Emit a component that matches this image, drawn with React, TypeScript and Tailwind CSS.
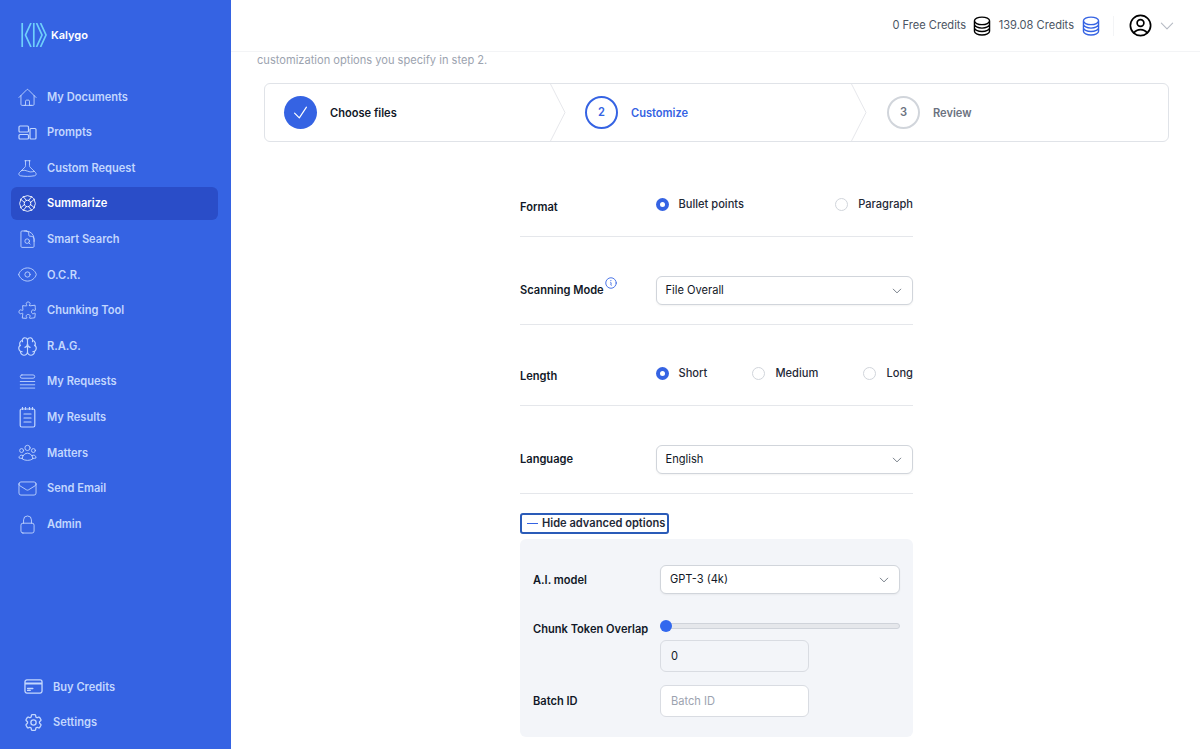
import { Brain } from "lucide-react";
import {
  HiOutlineBeaker,
  HiOutlineCheck,
  HiOutlineChevronDown,
  HiOutlineCircleStack,
  HiOutlineCog6Tooth,
  HiOutlineCreditCard,
  HiOutlineDocumentMagnifyingGlass,
  HiOutlineEnvelope,
  HiOutlineEye,
  HiOutlineHome,
  HiOutlineInformationCircle,
  HiOutlineLifebuoy,
  HiOutlineLockClosed,
  HiOutlinePuzzlePiece,
  HiOutlineQueueList,
  HiOutlineUserCircle,
  HiOutlineUserGroup,
} from "react-icons/hi2";

const PromptsIcon = ({ className }: { className?: string }) => (
  <svg viewBox="0 0 21 21" fill="none" stroke="currentColor" strokeWidth="1.2" className={className}>
    <rect x="2" y="4" width="9.5" height="6" rx="1" />
    <rect x="2" y="12.5" width="9.5" height="4.5" rx="1" />
    <rect x="13" y="6.5" width="6" height="10.5" rx="1" />
  </svg>
);

const NotepadIcon = ({ className }: { className?: string }) => (
  <svg viewBox="0 0 21 21" fill="none" stroke="currentColor" strokeWidth="1.2" strokeLinecap="round" className={className}>
    <rect x="3.2" y="2" width="14.6" height="18" rx="1.5" />
    <path d="M5.5 0.5v2M8.5 0.5v2M12.5 0.5v2M15.5 0.5v2M7 7h7M7 11h7M7 15h7" />
  </svg>
);

const Logo = () => (
  <svg viewBox="0 0 26 24" fill="none" stroke="#6fd0fb" strokeWidth="1.7" className="w-[26px] h-[24px]">
    <path d="M1.2 0v24M10 0 4.5 12 10 24M12.8 0v24M15.5 0 21 12 15.5 24M19.5 0 25 12 19.5 24" />
  </svg>
);

const navItems = [
  { label: "My Documents", icon: HiOutlineHome },
  { label: "Prompts", icon: PromptsIcon },
  { label: "Custom Request", icon: HiOutlineBeaker },
  { label: "Summarize", icon: HiOutlineLifebuoy, active: true },
  { label: "Smart Search", icon: HiOutlineDocumentMagnifyingGlass },
  { label: "O.C.R.", icon: HiOutlineEye },
  { label: "Chunking Tool", icon: HiOutlinePuzzlePiece },
  { label: "R.A.G.", icon: Brain },
  { label: "My Requests", icon: HiOutlineQueueList },
  { label: "My Results", icon: NotepadIcon },
  { label: "Matters", icon: HiOutlineUserGroup },
  { label: "Send Email", icon: HiOutlineEnvelope },
  { label: "Admin", icon: HiOutlineLockClosed },
];

const Sidebar = () => (
  <aside className="w-[231px] shrink-0 h-full bg-[#3563e3] flex flex-col">
    <div className="flex items-start gap-[4px] pl-[21px] pt-[23px] h-[80.5px]">
      <Logo />
      <span className="text-white font-semibold text-[11px] leading-[24px]">Kalygo</span>
    </div>
    <nav className="pl-[11px] pr-[13px] flex flex-col gap-[2.6px]">
      {navItems.map((item) => {
        const Icon = item.icon;
        return (
          <div
            key={item.label}
            className={`flex items-center h-[33px] pl-[6px] rounded-md ${
              item.active ? "bg-[#2a4dc8] text-white" : "text-[#c3d7fe]"
            }`}
          >
            <Icon className="w-[21px] h-[21px] mr-[9px] shrink-0" strokeWidth={item.icon === Brain ? 1.3 : undefined} />
            <span className="text-[11.1px] font-semibold">{item.label}</span>
          </div>
        );
      })}
    </nav>
    <div className="mt-auto pb-[10px] pl-[17px] flex flex-col gap-[2.6px] text-[#c3d7fe]">
      <div className="flex items-center h-[33px] pl-[6px]">
        <HiOutlineCreditCard className="w-[21px] h-[21px] mr-[9px]" />
        <span className="text-[11.1px] font-semibold">Buy Credits</span>
      </div>
      <div className="flex items-center h-[33px] pl-[6px]">
        <HiOutlineCog6Tooth className="w-[21px] h-[21px] mr-[9px]" />
        <span className="text-[11.1px] font-semibold">Settings</span>
      </div>
    </div>
  </aside>
);

const Header = () => (
  <header className="h-[52px] shrink-0 bg-white border-b border-[#f3f4f6] flex items-center justify-end pr-[24px] text-[11.1px] text-[#4b5563]">
    <span>0 Free Credits</span>
    <HiOutlineCircleStack className="w-[22px] h-[22px] text-black ml-[5px]" />
    <span className="ml-[5.5px]">139.08 Credits</span>
    <HiOutlineCircleStack className="w-[22px] h-[22px] text-[#3563e3] ml-[5.5px]" />
    <div className="w-px h-[20px] bg-[#f3f4f6] ml-[11px]" />
    <HiOutlineUserCircle className="w-[27px] h-[27px] text-black ml-[13px]" />
    <HiOutlineChevronDown className="w-[18px] h-[18px] text-[#b6bbc4] ml-[4.5px]" />
  </header>
);

const Chevron = () => (
  <svg viewBox="0 0 16 59" fill="none" stroke="#e5e7eb" className="w-[16px] h-[57px] shrink-0" preserveAspectRatio="none">
    <path d="M0.5 0 15 29.5 0.5 59" />
  </svg>
);

const Stepper = () => (
  <div className="mt-[15px] ml-[33px] mr-[31px] h-[59px] border border-[#e0e3e8] rounded-md flex items-center text-[11.1px] font-semibold">
    <div className="w-[285px] pl-[19px] flex items-center gap-[13px]">
      <div className="w-[33px] h-[33px] rounded-full bg-[#3563e3] flex items-center justify-center">
        <HiOutlineCheck className="w-[19px] h-[19px] text-white" />
      </div>
      <span className="text-[#111827] mt-px">Choose files</span>
    </div>
    <Chevron />
    <div className="w-[285px] pl-[19px] flex items-center gap-[13px]">
      <div className="w-[33px] h-[33px] rounded-full border-2 border-[#3563e3] flex items-center justify-center text-[#3563e3]">2</div>
      <span className="text-[#3563e3] mt-px">Customize</span>
    </div>
    <Chevron />
    <div className="pl-[20px] flex items-center gap-[13px]">
      <div className="w-[33px] h-[33px] rounded-full border-2 border-[#d1d5db] flex items-center justify-center text-[#6b7280]">3</div>
      <span className="text-[#6b7280] mt-px">Review</span>
    </div>
  </div>
);

const Radio = ({ label, checked }: { label: string; checked?: boolean }) => (
  <div className="flex items-center gap-[10px]">
    {checked ? (
      <span className="w-[13px] h-[13px] rounded-full bg-[#3563e3] flex items-center justify-center">
        <span className="w-[5px] h-[5px] rounded-full bg-white" />
      </span>
    ) : (
      <span className="w-[13px] h-[13px] rounded-full border border-[#d1d5db] bg-white" />
    )}
    <span className="text-[11.1px] leading-[16px] font-medium text-[#1f2937]">{label}</span>
  </div>
);

const SelectBox = ({ value, className }: { value: string; className?: string }) => (
  <div className={`h-[29px] bg-white border border-[#d1d5db] rounded-md shadow-xs flex items-center justify-between pl-[9px] pr-[9px] text-[11.1px] text-[#111827] ${className ?? ""}`}>
    <span>{value}</span>
    <HiOutlineChevronDown className="w-[12px] h-[12px] text-[#4b5563]" />
  </div>
);

const Label = ({ children }: { children: React.ReactNode }) => (
  <span className="block text-[11.1px] leading-[16px] font-semibold text-[#111827] whitespace-nowrap">{children}</span>
);

const Form = () => (
  <div className="w-[393px] ml-[289px] mt-[30px]">
    {/* format */}
    <div className="h-[65px] border-b border-[#e5e7eb] flex pt-[24px]">
      <div className="w-[135.5px] pt-[3px]"><Label>Format</Label></div>
      <div className="flex-1 flex justify-between items-start">
        <Radio label="Bullet points" checked />
        <Radio label="Paragraph" />
      </div>
    </div>
    {/* scanning mode */}
    <div className="h-[88px] border-b border-[#e5e7eb] flex pt-[39px]">
      <div className="w-[135.5px] flex items-start pt-[6px]">
        <Label>Scanning Mode</Label>
        <HiOutlineInformationCircle className="w-[14px] h-[14px] text-[#3563e3] mt-[-6px]" />
      </div>
      <SelectBox value="File Overall" className="flex-1" />
    </div>
    {/* length */}
    <div className="h-[81px] border-b border-[#e5e7eb] flex pt-[40px]">
      <div className="w-[135.5px] pt-[3px]"><Label>Length</Label></div>
      <div className="flex-1 flex justify-between items-start">
        <Radio label="Short" checked />
        <Radio label="Medium" />
        <Radio label="Long" />
      </div>
    </div>
    {/* language */}
    <div className="h-[88px] border-b border-[#e5e7eb] flex pt-[39px]">
      <div className="w-[135.5px] pt-[6px]"><Label>Language</Label></div>
      <SelectBox value="English" className="flex-1" />
    </div>
    <button className="mt-[19px] w-[149px] h-[21px] border-2 border-[#2a5bb8] rounded-[3px] flex items-center pl-[5px] gap-[4px] text-[11.1px] font-semibold text-[#1f2937] whitespace-nowrap">
      <span className="w-[11px] h-px bg-[#3563e3] shrink-0" />
      Hide advanced options
    </button>
    <div className="mt-[5px] h-[198px] bg-[#f3f5f9] rounded-md px-[13px] pt-[26px]">
      <div className="flex items-center">
        <div className="w-[127px]"><Label>A.I. model</Label></div>
        <SelectBox value="GPT-3 (4k)" className="flex-1" />
      </div>
      <div className="flex mt-[26px]">
        <div className="w-[127px] pt-[1px]"><Label>Chunk Token Overlap</Label></div>
        <div className="flex-1">
          <div className="relative h-[12px] flex items-center">
            <div className="w-full h-[6px] rounded-full bg-[#e5e7eb] border border-[#cfd3da]" />
            <span className="absolute left-0 top-0 w-[12px] h-[12px] rounded-full bg-[#3268ee]" />
          </div>
          <div className="mt-[8px] w-[149px] h-[32px] border border-[#d9dce2] rounded-md flex items-center pl-[10px] text-[11.1px] text-[#111827]">0</div>
        </div>
      </div>
      <div className="flex items-center mt-[13px]">
        <div className="w-[127px]"><Label>Batch ID</Label></div>
        <div className="w-[149px] h-[32px] bg-white border border-[#d9dce2] rounded-md flex items-center pl-[10px] text-[11.1px] text-[#9ca3af]">Batch ID</div>
      </div>
    </div>
  </div>
);

export default function App() {
  return (
    <div className="flex w-[1200px] h-[749px] overflow-hidden bg-white font-['Inter',sans-serif]">
      <Sidebar />
      <div className="flex-1 flex flex-col min-w-0">
        <Header />
        <main className="flex-1 overflow-hidden">
          <p className="ml-[26px] mt-[1px] text-[11.1px] leading-[15px] text-[#9ca3af]">customization options you specify in step 2.</p>
          <Stepper />
          <Form />
        </main>
      </div>
    </div>
  );
}
